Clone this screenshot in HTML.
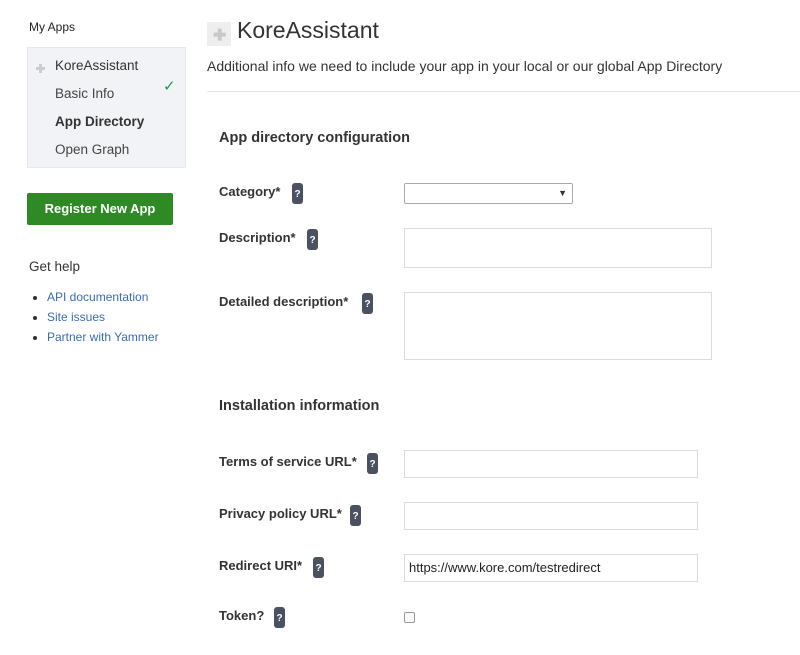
<!DOCTYPE html>
<html><head><style>
body{margin:0;width:800px;height:655px;background:#fff;font-family:"Liberation Sans",sans-serif;color:#333;position:relative;overflow:hidden}
.a{position:absolute;white-space:nowrap}
.side{position:absolute;left:27px;top:47px;width:159px;height:121px;background:#f2f3f6;border:1px solid #e6e8ec;box-sizing:border-box}
.lbl{position:absolute;font-weight:bold;font-size:13px;color:#333}
.q{position:absolute;width:11px;height:21px;background:#4a5262;border-radius:3px;color:#fff;font-size:10px;font-weight:bold;text-align:center;line-height:23px}
.box{position:absolute;border:1px solid #d9dbe0;box-sizing:border-box;background:#fff;font-size:13px;padding:0 4px;line-height:26px}
a{color:#3a6cb5;text-decoration:none}
</style></head><body>
<div class="a" style="left:29px;top:20px;font-size:12px;color:#222">My Apps</div>
<div class="side"></div>
<svg class="a" style="left:34px;top:62px" width="12" height="12" viewBox="0 0 12 12"><path d="M2 5h3V2h3v3h3v3H8v3H5V8H2z" fill="#ccc"/></svg>
<div class="a" style="left:55px;top:58px;font-size:13.5px;color:#333">KoreAssistant</div>
<div class="a" style="left:55px;top:86px;font-size:13.5px;color:#444">Basic Info</div>
<div class="a" style="left:163px;top:77px;font-size:15px;color:#1aa34a">✓</div>
<div class="a" style="left:55px;top:114px;font-size:13.5px;font-weight:bold;color:#333">App Directory</div>
<div class="a" style="left:55px;top:142px;font-size:13.5px;color:#444">Open Graph</div>
<div class="a" style="left:27px;top:193px;width:146px;height:32px;background:#2f8a25;border-radius:2px;color:#fff;font-weight:bold;font-size:13px;text-align:center;line-height:32px">Register New App</div>
<div class="a" style="left:29px;top:259px;font-size:13.5px;color:#333">Get help</div>
<ul class="a" style="left:29px;top:287px;margin:0;padding:0 0 0 18px;font-size:12px;line-height:20px;color:#333">
<li><a>API documentation</a></li><li><a>Site issues</a></li><li><a>Partner with Yammer</a></li></ul>
<div class="a" style="left:207px;top:22px;width:24px;height:24px;background:#eee"></div>
<svg class="a" style="left:211px;top:26px" width="16" height="16" viewBox="0 0 12 12"><path d="M2 5h3V2h3v3h3v3H8v3H5V8H2z" fill="#c8c8c8"/></svg>
<div class="a" style="left:237px;top:17px;font-size:23px;color:#333">KoreAssistant</div>
<div class="a" style="left:207px;top:58px;font-size:14px;color:#333">Additional info we need to include your app in your local or our global App Directory</div>
<div class="a" style="left:207px;top:91px;width:593px;height:1px;background:#e5e5e5"></div>
<div class="a" style="left:219px;top:130px;font-size:14.5px;font-weight:bold;color:#333">App directory configuration</div>
<div class="lbl" style="left:219px;top:184px">Category*</div><div class="q" style="left:292px;top:183px">?</div>
<div class="box" style="left:404px;top:183px;width:169px;height:21px;border-color:#a9a9a9;border-radius:2px"><span style="position:absolute;right:5px;top:-4px;font-size:9px">▼</span></div>
<div class="lbl" style="left:219px;top:230px">Description*</div><div class="q" style="left:307px;top:229px">?</div>
<div class="box" style="left:404px;top:228px;width:308px;height:40px"></div>
<div class="lbl" style="left:219px;top:294px">Detailed description*</div><div class="q" style="left:362px;top:293px">?</div>
<div class="box" style="left:404px;top:292px;width:308px;height:68px"></div>
<div class="a" style="left:219px;top:398px;font-size:14.5px;font-weight:bold;color:#333">Installation information</div>
<div class="lbl" style="left:219px;top:454px">Terms of service URL*</div><div class="q" style="left:367px;top:453px">?</div>
<div class="box" style="left:404px;top:450px;width:294px;height:28px"></div>
<div class="lbl" style="left:219px;top:506px">Privacy policy URL*</div><div class="q" style="left:350px;top:505px">?</div>
<div class="box" style="left:404px;top:502px;width:294px;height:28px"></div>
<div class="lbl" style="left:219px;top:558px">Redirect URI*</div><div class="q" style="left:313px;top:557px">?</div>
<div class="box" style="left:404px;top:554px;width:294px;height:28px;color:#222">https://www.kore.com/testredirect</div>
<div class="lbl" style="left:219px;top:608px">Token?</div><div class="q" style="left:274px;top:607px">?</div>
<div class="a" style="left:404px;top:612px;width:11px;height:11px;border:1px solid #999;border-radius:2px;box-sizing:border-box;background:#fafafa"></div>
</body></html>
